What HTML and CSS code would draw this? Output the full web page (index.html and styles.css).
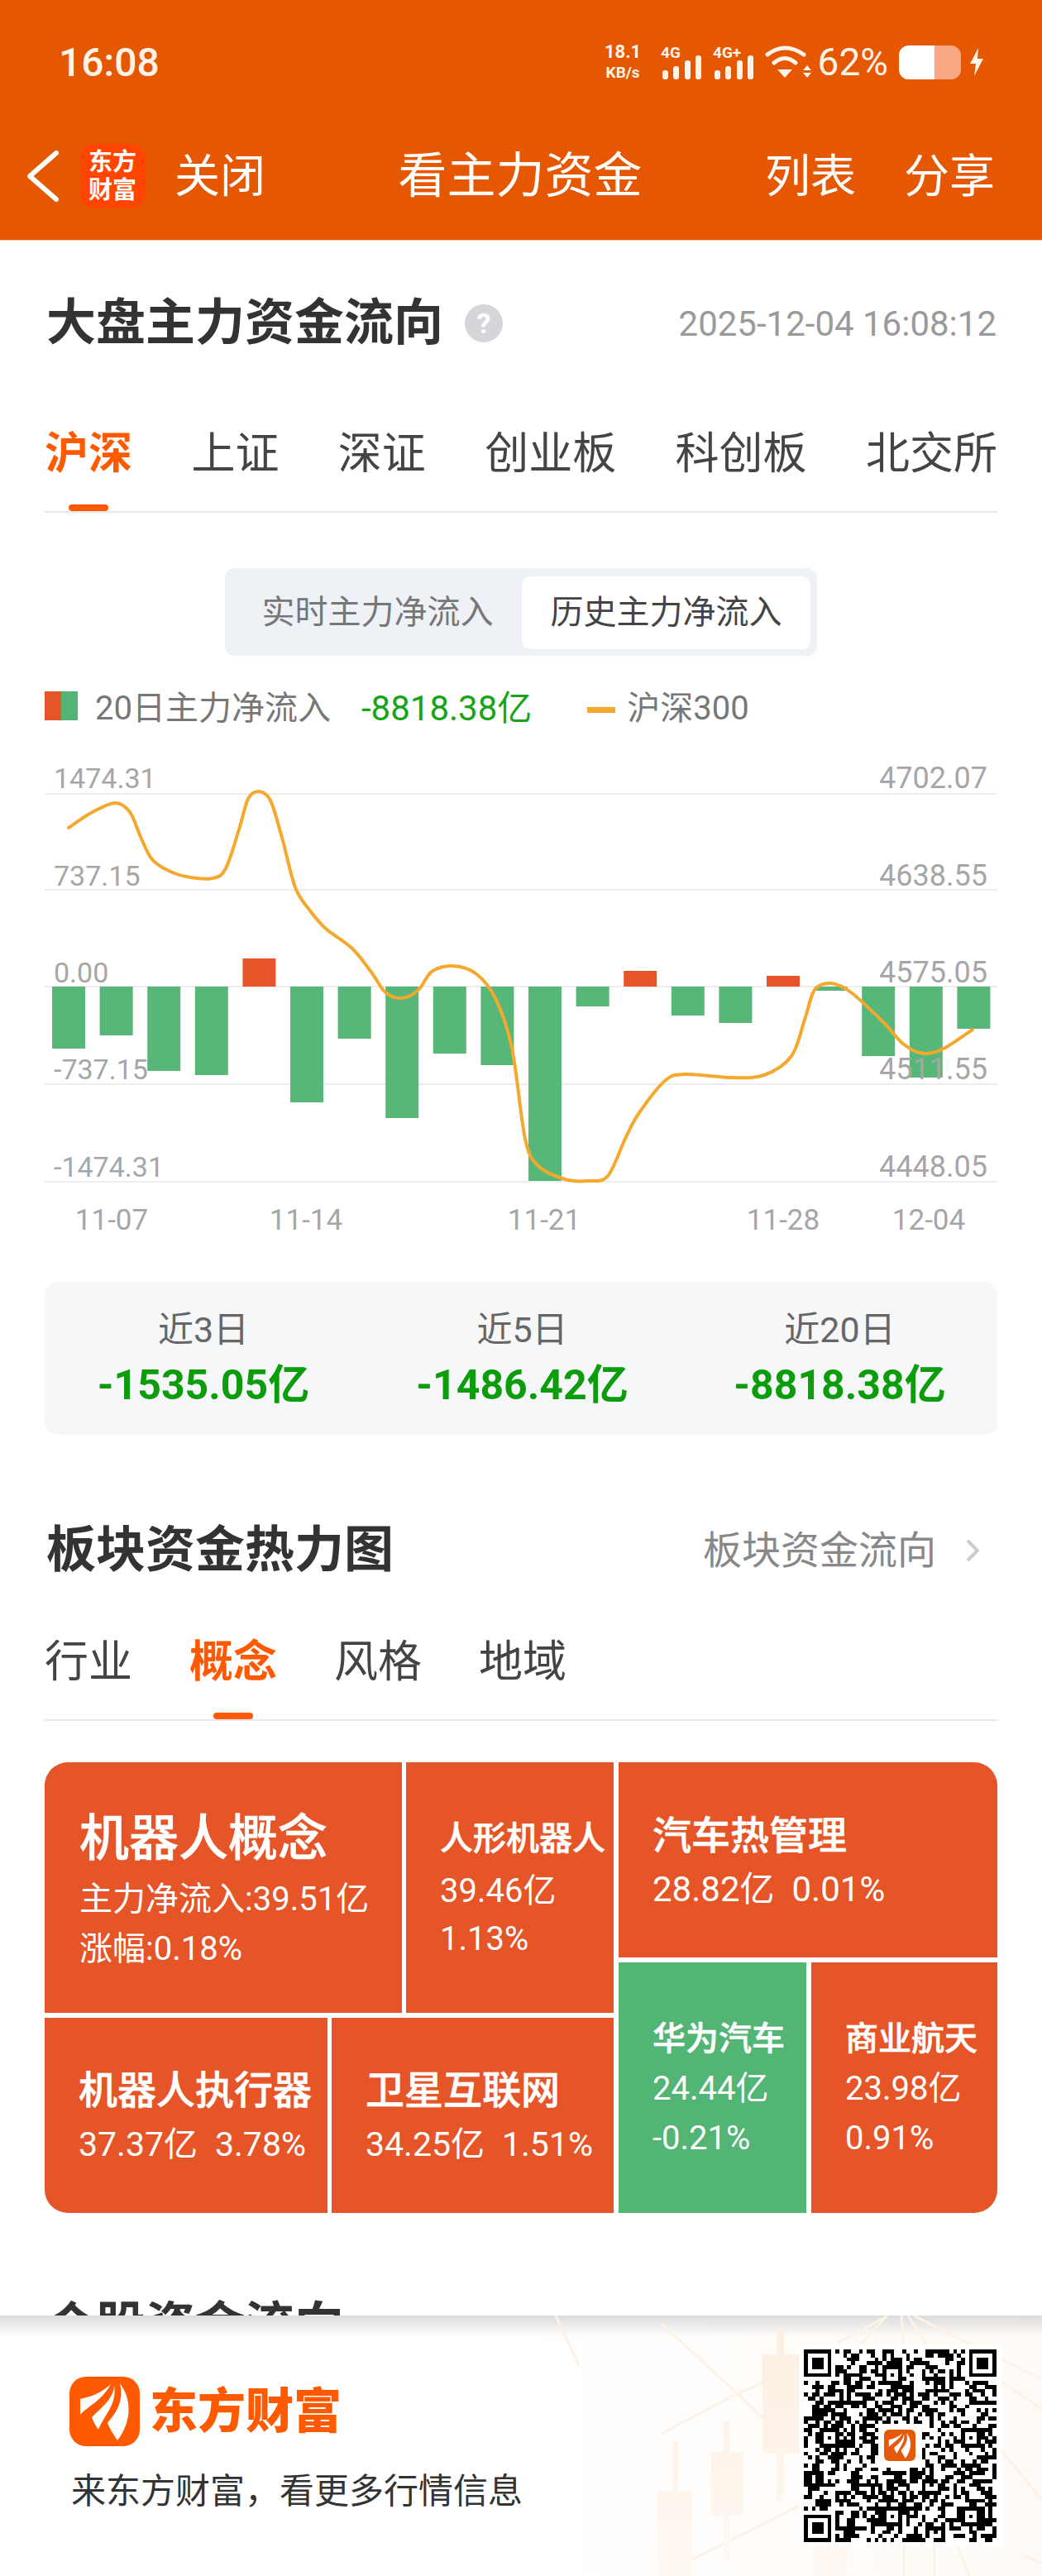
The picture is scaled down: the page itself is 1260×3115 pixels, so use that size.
FILE: index.html
```html
<html lang="zh-CN">
<head>
	<meta charset="utf-8">
	<link rel="stylesheet" href="styles.css">
	<script src="script.js" defer></script>
</head>
<body>
<svg class="defs">
	<symbol id="swoosh" viewBox="0 0 85 84">
		<path d="M50 9C38 20 26 24 13 27L13 46C22 36 40 28 50 9Z"/>
		<path d="M54 10C54 26 38 38 27 49C29 55 32 60 35 64C42 46 58 34 54 10Z"/>
		<path d="M61 8C66 28 58 42 46 56C49 64 54 71 58 77C70 62 80 34 61 8Z"/>
	</symbol>
</svg>

<header class="app_header">
	<div class="status_bar">
		<span class="status_time">16:08</span>
		<div class="status_icons">
			<div class="net_speed"><span>18.1</span><span class="net_unit">KB/s</span></div>
			<svg class="signal signal_first" viewBox="0 0 50 42">
				<text x="0" y="16">4G</text>
				<rect x="2" y="31" width="7" height="11" rx="3"/><rect x="15" y="26" width="7" height="16" rx="3"/><rect x="29" y="19" width="7" height="23" rx="3"/><rect x="42" y="13" width="7" height="29" rx="3"/>
			</svg>
			<svg class="signal" viewBox="0 0 50 42">
				<text x="0" y="16">4G+</text>
				<rect x="2" y="31" width="7" height="11" rx="3"/><rect x="15" y="26" width="7" height="16" rx="3"/><rect x="29" y="19" width="7" height="23" rx="3"/><rect x="42" y="13" width="7" height="29" rx="3"/>
			</svg>
			<svg class="wifi" viewBox="0 0 56 44">
				<path class="wifi_arc" d="M3 13Q24 -3 47 13M11 23Q24 12 37 23"/>
				<path d="M15 31L33 31L24 41Z"/>
				<path d="M46 32L51 26L56 32ZM46 35L51 41L56 35Z"/>
			</svg>
			<span class="status_battery_text">62%</span>
			<div class="battery"><div class="battery_level"></div></div>
			<svg class="bolt" viewBox="0 0 16 34"><path d="M10 0L0 19L7 19L5 34L16 13L9 13Z"/></svg>
		</div>
	</div>
	<nav class="nav_bar">
		<div class="nav_left">
			<svg class="back_icon" viewBox="0 0 38 62"><path d="M35 3L3 31L35 59"/></svg>
			<div class="app_badge"><span>东方</span><span>财富</span></div>
			<span class="nav_text">关闭</span>
		</div>
		<span class="nav_title">看主力资金</span>
		<div class="nav_right">
			<span class="nav_text">列表</span>
			<span class="nav_text">分享</span>
		</div>
	</nav>
</header>

<main class="page">
	<div class="title_row">
		<div class="title_group">
			<h2 class="section_title">大盘主力资金流向</h2>
			<span class="help_icon">?</span>
		</div>
		<span class="update_time">2025-12-04 16:08:12</span>
	</div>

	<div class="tabs tabs_market">
		<span class="tab tab_active">沪深</span>
		<span class="tab">上证</span>
		<span class="tab">深证</span>
		<span class="tab">创业板</span>
		<span class="tab">科创板</span>
		<span class="tab">北交所</span>
	</div>

	<div class="segment_wrap">
		<div class="segment">
			<span class="segment_item">实时主力净流入</span>
			<span class="segment_item segment_active">历史主力净流入</span>
		</div>
	</div>

	<div class="legend">
		<span class="legend_swatch"></span>
		<span class="legend_text">20日主力净流入</span>
		<span class="legend_value">-8818.38亿</span>
		<span class="legend_dash"></span>
		<span class="legend_text">沪深300</span>
	</div>

	<svg class="flow_chart" viewBox="54 900 1152 610">
		<g class="chart_grid">
			<rect x="54" y="959" width="1152" height="2"/>
			<rect x="54" y="1075" width="1152" height="2"/>
			<rect x="54" y="1192" width="1152" height="2"/>
			<rect x="54" y="1310" width="1152" height="2"/>
			<rect x="54" y="1428" width="1152" height="2"/>
		</g>
		<g id="chart_bars"></g>
		<g class="chart_labels">
			<text x="65" y="953">1474.31</text>
			<text x="65" y="1071">737.15</text>
			<text x="65" y="1188">0.00</text>
			<text x="65" y="1305">-737.15</text>
			<text x="65" y="1423">-1474.31</text>
			<text class="label_right" x="1194" y="953">4702.07</text>
			<text class="label_right" x="1194" y="1071">4638.55</text>
			<text class="label_right" x="1194" y="1188">4575.05</text>
			<text class="label_right" x="1194" y="1305">4511.55</text>
			<text class="label_right" x="1194" y="1423">4448.05</text>
			<text class="label_date" x="135" y="1487">11-07</text>
			<text class="label_date" x="370" y="1487">11-14</text>
			<text class="label_date" x="658" y="1487">11-21</text>
			<text class="label_date" x="947" y="1487">11-28</text>
			<text class="label_date" x="1123" y="1487">12-04</text>
		</g>
		<path id="chart_line" class="chart_line"/>
	</svg>

	<div class="summary">
		<div class="summary_item">
			<div class="summary_label">近3日</div>
			<div class="summary_value">-1535.05亿</div>
		</div>
		<div class="summary_item">
			<div class="summary_label">近5日</div>
			<div class="summary_value">-1486.42亿</div>
		</div>
		<div class="summary_item">
			<div class="summary_label">近20日</div>
			<div class="summary_value">-8818.38亿</div>
		</div>
	</div>

	<div class="heat_title_row">
		<h2 class="section_title">板块资金热力图</h2>
		<div class="more_link">
			<span>板块资金流向</span>
			<svg class="more_arrow" viewBox="0 0 16 28"><path d="M2 2L14 14L2 26"/></svg>
		</div>
	</div>

	<div class="tabs tabs_heat">
		<span class="tab">行业</span>
		<span class="tab tab_active">概念</span>
		<span class="tab">风格</span>
		<span class="tab">地域</span>
	</div>

	<div class="treemap">
		<div class="tree_col tree_left">
			<div class="tree_row tree_row_a">
				<div class="cell cell_big">
					<div class="cell_name">机器人概念</div>
					<div class="cell_stat">主力净流入:39.51亿</div>
					<div class="cell_stat">涨幅:0.18%</div>
				</div>
				<div class="cell cell_robot">
					<div class="cell_name">人形机器人</div>
					<div class="cell_stat">39.46亿</div>
					<div class="cell_stat">1.13%</div>
				</div>
			</div>
			<div class="tree_row tree_row_b">
				<div class="cell cell_wide cell_actuator">
					<div class="cell_name">机器人执行器</div>
					<div class="cell_stat">37.37亿<span class="cell_pct">3.78%</span></div>
				</div>
				<div class="cell cell_wide cell_satellite">
					<div class="cell_name">卫星互联网</div>
					<div class="cell_stat">34.25亿<span class="cell_pct">1.51%</span></div>
				</div>
			</div>
		</div>
		<div class="tree_col tree_right">
			<div class="tree_row tree_row_c">
				<div class="cell cell_wide cell_thermal">
					<div class="cell_name">汽车热管理</div>
					<div class="cell_stat">28.82亿<span class="cell_pct">0.01%</span></div>
				</div>
			</div>
			<div class="tree_row tree_row_d">
				<div class="cell cell_tall cell_down">
					<div class="cell_name">华为汽车</div>
					<div class="cell_stat">24.44亿</div>
					<div class="cell_stat">-0.21%</div>
				</div>
				<div class="cell cell_tall cell_space">
					<div class="cell_name">商业航天</div>
					<div class="cell_stat">23.98亿</div>
					<div class="cell_stat">0.91%</div>
				</div>
			</div>
		</div>
	</div>

	<h2 class="section_title stock_title">个股资金流向</h2>
</main>

<footer class="promo">
	<svg class="promo_pattern" viewBox="640 2800 620 315">
		<defs>
			<linearGradient id="candle_fade" x1="0" y1="2800" x2="0" y2="3115" gradientUnits="userSpaceOnUse">
				<stop offset="0" stop-color="#fdeee1"/>
				<stop offset="1" stop-color="#fff9f3"/>
			</linearGradient>
		</defs>
		<g class="pattern_lines">
			<path d="M800 2810L890 2893L967 2965M800 2943L890 2895L967 2862M833 3097L967 3030"/>
			<path d="M1013 2833L1070 2802M1073 2800L1040 2835M1090 2800L1093 2835M1098 2800L1120 2835M1105 2800L1173 2835"/>
			<path d="M1211 2853L1260 2877M1211 2880L1260 2913M1211 2963L1260 3023"/>
			<path d="M1093 3079L1093 3115M1130 3079L1130 3115M1158 3079L1172 3115M1237 3090L1260 3100M672 2800L700 2860"/>
		</g>
		<g fill="url(#candle_fade)">
			<rect x="939" y="2815" width="9" height="208"/><rect x="922" y="2847" width="44" height="120"/>
			<rect x="875" y="2928" width="7" height="170"/><rect x="860" y="2965" width="39" height="77"/>
			<rect x="814" y="2953" width="6" height="162"/><rect x="795" y="3012" width="42" height="103"/>
			<rect x="984" y="3079" width="41" height="36"/>
		</g>
	</svg>
	<div class="promo_left">
		<div class="promo_brand">
			<svg class="brand_logo" viewBox="0 0 85 84"><use href="#swoosh"/></svg>
			<span class="brand_name">东方财富</span>
		</div>
		<div class="promo_slogan">来东方财富，看更多行情信息</div>
	</div>
	<div class="qr_box">
		<svg class="qr_code" viewBox="0 0 49 49" shape-rendering="crispEdges"><path id="qr_modules"/></svg>
		<svg class="qr_logo" viewBox="0 0 85 84"><use href="#swoosh"/></svg>
	</div>
</footer>
</body>
</html>
```

FILE: styles.css
```css
/*
	orange header #e55700
	up   #e55527
	down #52b574
*/
html {
	background: white;
}

body {
	margin: 0;
	width: 1260px;
	height: 3115px;
	display: flex;
	flex-direction: column;
	overflow: hidden;
	font-family: Roboto, "Noto Sans CJK SC", sans-serif;
	color: #333;
}

.defs {
	display: none;
}

h2 {
	margin: 0;
}

/* header */

.app_header {
	height: 291px;
	flex: none;
	background: #e55700;
	color: white;
	box-sizing: border-box;
	border-bottom: 1px solid #f3c9a8;
}

.status_bar {
	height: 150px;
	display: flex;
	align-items: center;
	justify-content: space-between;
	padding: 0 71px 0 71px;
	box-sizing: border-box;
}

.status_time {
	font-size: 48px;
	font-weight: 500;
	color: #fff3ea;
}

.status_icons {
	display: flex;
	align-items: center;
	column-gap: 13px;
	color: #fff3ea;
	fill: #fff3ea;
}

.net_speed {
	width: 49px;
	display: flex;
	flex-direction: column;
	align-items: center;
	font-size: 22px;
	font-weight: 700;
	line-height: 25px;
}

.net_unit {
	font-size: 19px;
}

.signal {
	width: 50px;
	height: 42px;
	overflow: visible;
}

.signal_first {
	margin-left: 8px;
}

.signal text {
	font-size: 19px;
	font-weight: 700;
}

.wifi {
	width: 56px;
	height: 44px;
	margin-right: -5px;
}

.wifi_arc {
	fill: none;
	stroke: #fff3ea;
	stroke-width: 5;
	stroke-linecap: round;
}

.status_battery_text {
	font-size: 46px;
	line-height: 50px;
}

.battery {
	width: 75px;
	height: 41px;
	border-radius: 12px;
	background: #f7a783;
	overflow: hidden;
}

.battery_level {
	width: 43px;
	height: 100%;
	background: white;
}

.bolt {
	width: 16px;
	height: 34px;
	margin-left: -2px;
}

.nav_bar {
	height: 126px;
	display: grid;
	grid-template-columns: 1fr auto 1fr;
	align-items: center;
	padding: 0 57px 0 33px;
}

.nav_left {
	display: flex;
	align-items: center;
}

.back_icon {
	width: 38px;
	height: 62px;
	fill: none;
	stroke: white;
	stroke-width: 6;
	stroke-linecap: round;
	stroke-linejoin: round;
}

.app_badge {
	width: 78px;
	height: 78px;
	margin-left: 26px;
	margin-right: 36px;
	border-radius: 16px;
	background: #ff4500;
	display: flex;
	flex-direction: column;
	align-items: center;
	justify-content: center;
	font-size: 29px;
	font-weight: 700;
	line-height: 34px;
}

.nav_text {
	font-size: 55px;
	line-height: 60px;
}

.nav_title {
	margin-left: 22px;
	font-size: 59px;
	line-height: 60px;
}

.nav_right {
	display: flex;
	justify-content: flex-end;
	column-gap: 58px;
}

/* content */

.page {
	flex: 1;
	min-height: 0;
	overflow: hidden;
	padding: 0 54px;
}

.title_row {
	display: flex;
	align-items: center;
	justify-content: space-between;
	height: 60px;
	margin-top: 70px;
	padding-right: 1px;
}

.title_group {
	display: flex;
	align-items: center;
	column-gap: 26px;
	padding-left: 2px;
}

.section_title {
	font-size: 60px;
	line-height: 60px;
	font-weight: 700;
	color: #333;
}

.help_icon {
	width: 46px;
	height: 46px;
	border-radius: 50%;
	background: #d6d6da;
	color: white;
	font-size: 34px;
	font-weight: 700;
	line-height: 46px;
	text-align: center;
}

.update_time {
	font-size: 42px;
	color: #9a9a9a;
}

.tabs {
	display: flex;
	border-bottom: 2px solid #e8e8e8;
	box-sizing: content-box;
}

.tabs_market {
	justify-content: space-between;
	margin-top: 76px;
}

.tabs_heat {
	column-gap: 69px;
	margin-top: 53px;
}

.tab {
	position: relative;
	font-size: 53px;
	line-height: 104px;
	height: 121px;
	color: #444;
}

.tab_active {
	font-weight: 700;
	color: #ff5a00;
}

.tab_active::after {
	content: "";
	position: absolute;
	left: 50%;
	bottom: 0;
	width: 48px;
	height: 8px;
	margin-left: -24px;
	border-radius: 4px;
	background: #ff5a00;
}

.segment_wrap {
	display: flex;
	justify-content: center;
	margin-top: 67px;
}

.segment {
	display: flex;
	height: 106px;
	box-sizing: border-box;
	padding: 10px 8px 8px 10px;
	border-radius: 12px;
	background: #eef1f6;
}

.segment_item {
	width: 349px;
	border-radius: 10px;
	font-size: 40px;
	line-height: 88px;
	text-align: center;
	color: #777;
}

.segment_active {
	background: white;
	color: #444;
}

.legend {
	display: flex;
	align-items: center;
	height: 40px;
	margin-top: 40px;
}

.legend_swatch {
	width: 40px;
	height: 35px;
	margin-right: 21px;
}

.legend_swatch {
	background: linear-gradient(to right, #e55527 50%, #52b574 50%);
}

.legend_text {
	margin-top: 8px;
	font-size: 40px;
	line-height: 46px;
	color: #777;
}

.legend_value {
	margin-top: 8px;
	margin-left: 37px;
	font-size: 42px;
	line-height: 46px;
	color: #18a418;
}

.legend_dash {
	width: 34px;
	height: 7px;
	margin: 10px 14px 0 67px;
	background: #f5a82e;
}

.flow_chart {
	display: block;
	width: 1152px;
	height: 610px;
	margin-top: 27px;
}

.chart_grid {
	fill: #ededed;
}

.chart_labels {
	font-size: 34px;
	fill: #a6a6a6;
}

.label_right {
	text-anchor: end;
	font-size: 36px;
}

.label_date {
	text-anchor: middle;
	font-size: 35px;
}

.bar_up {
	fill: #e55527;
}

.bar_down {
	fill: #52b574;
	fill-opacity: 0.97;
}

.chart_line {
	fill: none;
	stroke: #f5a82e;
	stroke-width: 4;
	stroke-linecap: round;
	stroke-linejoin: round;
}

.summary {
	display: grid;
	grid-template-columns: 384px 387px 1fr;
	height: 185px;
	margin-top: 40px;
	padding-top: 33px;
	box-sizing: border-box;
	border-radius: 16px;
	background: #f6f7f9;
	text-align: center;
}

.summary_label {
	font-size: 43px;
	line-height: 50px;
	color: #666;
}

.summary_value {
	margin-top: 12px;
	font-size: 50px;
	line-height: 60px;
	font-weight: 700;
	color: #0c9c0c;
}

.heat_title_row {
	display: flex;
	align-items: center;
	justify-content: space-between;
	height: 60px;
	margin-top: 110px;
	padding: 0 22px 0 2px;
}

.more_link {
	display: flex;
	align-items: center;
	column-gap: 36px;
	font-size: 47px;
	line-height: 56px;
	color: #888;
}

.more_arrow {
	width: 16px;
	height: 28px;
	fill: none;
	stroke: #ccc;
	stroke-width: 4;
}

/* treemap */

.treemap {
	display: flex;
	column-gap: 6px;
	height: 545px;
	margin-top: 50px;
	border-radius: 28px;
	overflow: hidden;
}

.tree_col {
	display: flex;
	flex-direction: column;
	row-gap: 6px;
}

.tree_left {
	width: 688px;
}

.tree_right {
	width: 458px;
}

.tree_row {
	display: flex;
	column-gap: 5px;
}

.tree_row_a {
	height: 303px;
}

.tree_row_b {
	height: 236px;
}

.tree_row_c {
	height: 236px;
}

.tree_row_d {
	height: 303px;
	column-gap: 6px;
}

.cell {
	display: flex;
	flex-direction: column;
	justify-content: center;
	flex: 1;
	box-sizing: border-box;
	padding-left: 41px;
	padding-top: 4px;
	background: #e55527;
	color: white;
	font-size: 40px;
}

.cell_name {
	line-height: 60px;
	font-size: 47px;
	font-weight: 500;
	-webkit-text-stroke: 0.6px white;
}

.cell_stat {
	line-height: 58px;
	font-size: 41px;
	white-space: nowrap;
}

.cell_wide .cell_name {
	margin-bottom: 6px;
}

.cell_pct {
	margin-left: 21px;
}

.cell_big {
	flex: none;
	width: 432px;
	padding-left: 42px;
	padding-top: 16px;
}

.cell_big .cell_name {
	font-size: 60px;
	margin-bottom: 13px;
}

.cell_big .cell_stat {
	font-size: 40px;
	line-height: 60px;
}

.cell_robot {
	padding-left: 41px;
	padding-top: 2px;
}

.cell_robot .cell_name {
	font-size: 40px;
	margin-bottom: 4px;
}

.cell_robot .cell_stat,
.cell_tall .cell_stat {
	font-size: 40px;
}

.cell_actuator {
	flex: none;
	width: 342px;
}

.cell_thermal {
	padding-top: 6px;
}

.cell_thermal .cell_stat {
	font-size: 42px;
}

.cell_tall {
	padding-top: 2px;
}

.cell_tall .cell_name {
	font-size: 40px;
}

.cell_tall .cell_stat {
	line-height: 60px;
}

.cell_down {
	flex: none;
	width: 227px;
	background: #52b574;
}

.stock_title {
	margin-top: 107px;
	padding-left: 2px;
}

/* bottom promo */

.promo {
	position: relative;
	flex: none;
	height: 315px;
	display: flex;
	justify-content: space-between;
	align-items: flex-start;
	box-sizing: border-box;
	padding: 35px 49px 0 84px;
	background: linear-gradient(to right, white 50%, #fffaf5);
}

.promo::before {
	content: "";
	position: absolute;
	top: 0;
	left: 0;
	right: 0;
	height: 26px;
	background: linear-gradient(#dcdcdc, rgba(240, 240, 240, 0));
}

.promo_pattern {
	position: absolute;
	top: 0;
	right: 0;
	width: 620px;
	height: 315px;
}

.pattern_lines {
	fill: none;
	stroke: #fef1e6;
	stroke-width: 3;
}

.promo_left {
	position: relative;
	padding-top: 39px;
}

.promo_brand {
	display: flex;
	align-items: center;
	column-gap: 12px;
}

.brand_logo {
	width: 85px;
	height: 84px;
	border-radius: 20px;
	background: #ff5a00;
	fill: white;
}

.brand_name {
	font-size: 58px;
	line-height: 84px;
	font-weight: 900;
	color: #ff5a00;
}

.promo_slogan {
	margin-top: 30px;
	font-size: 42px;
	line-height: 50px;
	color: #333;
	padding-left: 2px;
}

.qr_box {
	position: relative;
	width: 244px;
	height: 244px;
	background: white;
	box-sizing: border-box;
	padding: 6px 5px;
}

.qr_code {
	display: block;
	width: 233px;
	height: 233px;
}

.qr_logo {
	position: absolute;
	left: 102px;
	top: 103px;
	width: 38px;
	height: 38px;
	border-radius: 6px;
	background: #e55a0a;
	fill: white;
}
```

FILE: script.js
```js
// net inflow bars, top/bottom in page pixels, zero line at 1193
const ZERO_Y = 1193
const barEnds = [1268, 1252, 1295, 1300, 1159, 1333, 1256, 1352, 1274, 1288, 1428, 1217, 1174, 1228, 1237, 1180, 1198, 1277, 1303, 1244]

// index line
const linePoints = [
	[83, 1001], [110, 983], [139, 971], [157, 982], [170, 1012], [183, 1038], [200, 1051], [225, 1060], [257, 1062], [273, 1050], [289, 1003],
	[300, 966], [313, 957], [327, 968], [341, 1013], [357, 1073], [374, 1100], [394, 1123], [426, 1147], [450, 1177], [466, 1200],
	[486, 1207], [506, 1197], [522, 1175], [547, 1168], [575, 1177], [599, 1207], [619, 1267], [635, 1377], [651, 1410], [683, 1426],
	[711, 1428], [735, 1422], [756, 1377], [772, 1347], [804, 1307], [828, 1299], [884, 1303], [924, 1300], [957, 1277], [973, 1233],
	[985, 1197], [1005, 1189], [1029, 1200], [1069, 1237], [1093, 1263], [1117, 1274], [1141, 1268], [1176, 1245]
]

function renderBars() {
	const group = document.getElementById("chart_bars")
	let html = ""
	barEnds.forEach((end, i) => {
		const x = (63 + i * 57.6).toFixed(1)
		const top = Math.min(end, ZERO_Y)
		const height = Math.abs(end - ZERO_Y)
		const cls = end < ZERO_Y ? "bar_up" : "bar_down"
		html += `<rect class="${cls}" x="${x}" y="${top}" width="40" height="${height}"/>`
	})
	group.innerHTML = html
}

function renderLine() {
	const pts = linePoints
	let d = `M${pts[0][0]} ${pts[0][1]}`
	for (let i = 0; i < pts.length - 1; i++) {
		const p0 = pts[Math.max(i - 1, 0)]
		const p1 = pts[i]
		const p2 = pts[i + 1]
		const p3 = pts[Math.min(i + 2, pts.length - 1)]
		const c1x = p1[0] + (p2[0] - p0[0]) / 6
		const c1y = p1[1] + (p2[1] - p0[1]) / 6
		const c2x = p2[0] - (p3[0] - p1[0]) / 6
		const c2y = p2[1] - (p3[1] - p1[1]) / 6
		d += `C${c1x.toFixed(1)} ${c1y.toFixed(1)} ${c2x.toFixed(1)} ${c2y.toFixed(1)} ${p2[0]} ${p2[1]}`
	}
	document.getElementById("chart_line").setAttribute("d", d)
}

// ============================================
// 							QR CODE
// ============================================

function finderAt(grid, row, col, size) {
	for (let r = 0; r < size; r++) {
		for (let c = 0; c < size; c++) {
			grid[row + r][col + c] = Math.min(r, c, size - 1 - r, size - 1 - c) !== 1
		}
	}
}

function renderQr() {
	const size = 49
	const grid = []
	let seed = 20251204
	for (let r = 0; r < size; r++) {
		grid.push([])
		for (let c = 0; c < size; c++) {
			seed = (seed * 1103515245 + 12345) % 2147483648
			grid[r].push((seed >> 12) % 100 < 52)
		}
	}
	// quiet strip round the finders
	for (let i = 0; i < 8; i++) {
		for (let j = 0; j < 8; j++) {
			grid[i][j] = false
			grid[i][size - 1 - j] = false
			grid[size - 1 - i][j] = false
		}
	}
	finderAt(grid, 0, 0, 7)
	finderAt(grid, 0, size - 7, 7)
	finderAt(grid, size - 7, 0, 7)
	finderAt(grid, 20, 4, 5)
	finderAt(grid, 20, 40, 5)
	finderAt(grid, 4, 20, 5)
	finderAt(grid, 40, 20, 5)
	finderAt(grid, 40, 40, 5)
	// room for the logo
	for (let r = 19; r < 30; r++) {
		for (let c = 19; c < 30; c++) {
			grid[r][c] = false
		}
	}
	let d = ""
	grid.forEach((row, r) => row.forEach((on, c) => {
		if (on) d += `M${c} ${r}h1v1h-1z`
	}))
	document.getElementById("qr_modules").setAttribute("d", d)
}

renderBars()
renderLine()
renderQr()
```
